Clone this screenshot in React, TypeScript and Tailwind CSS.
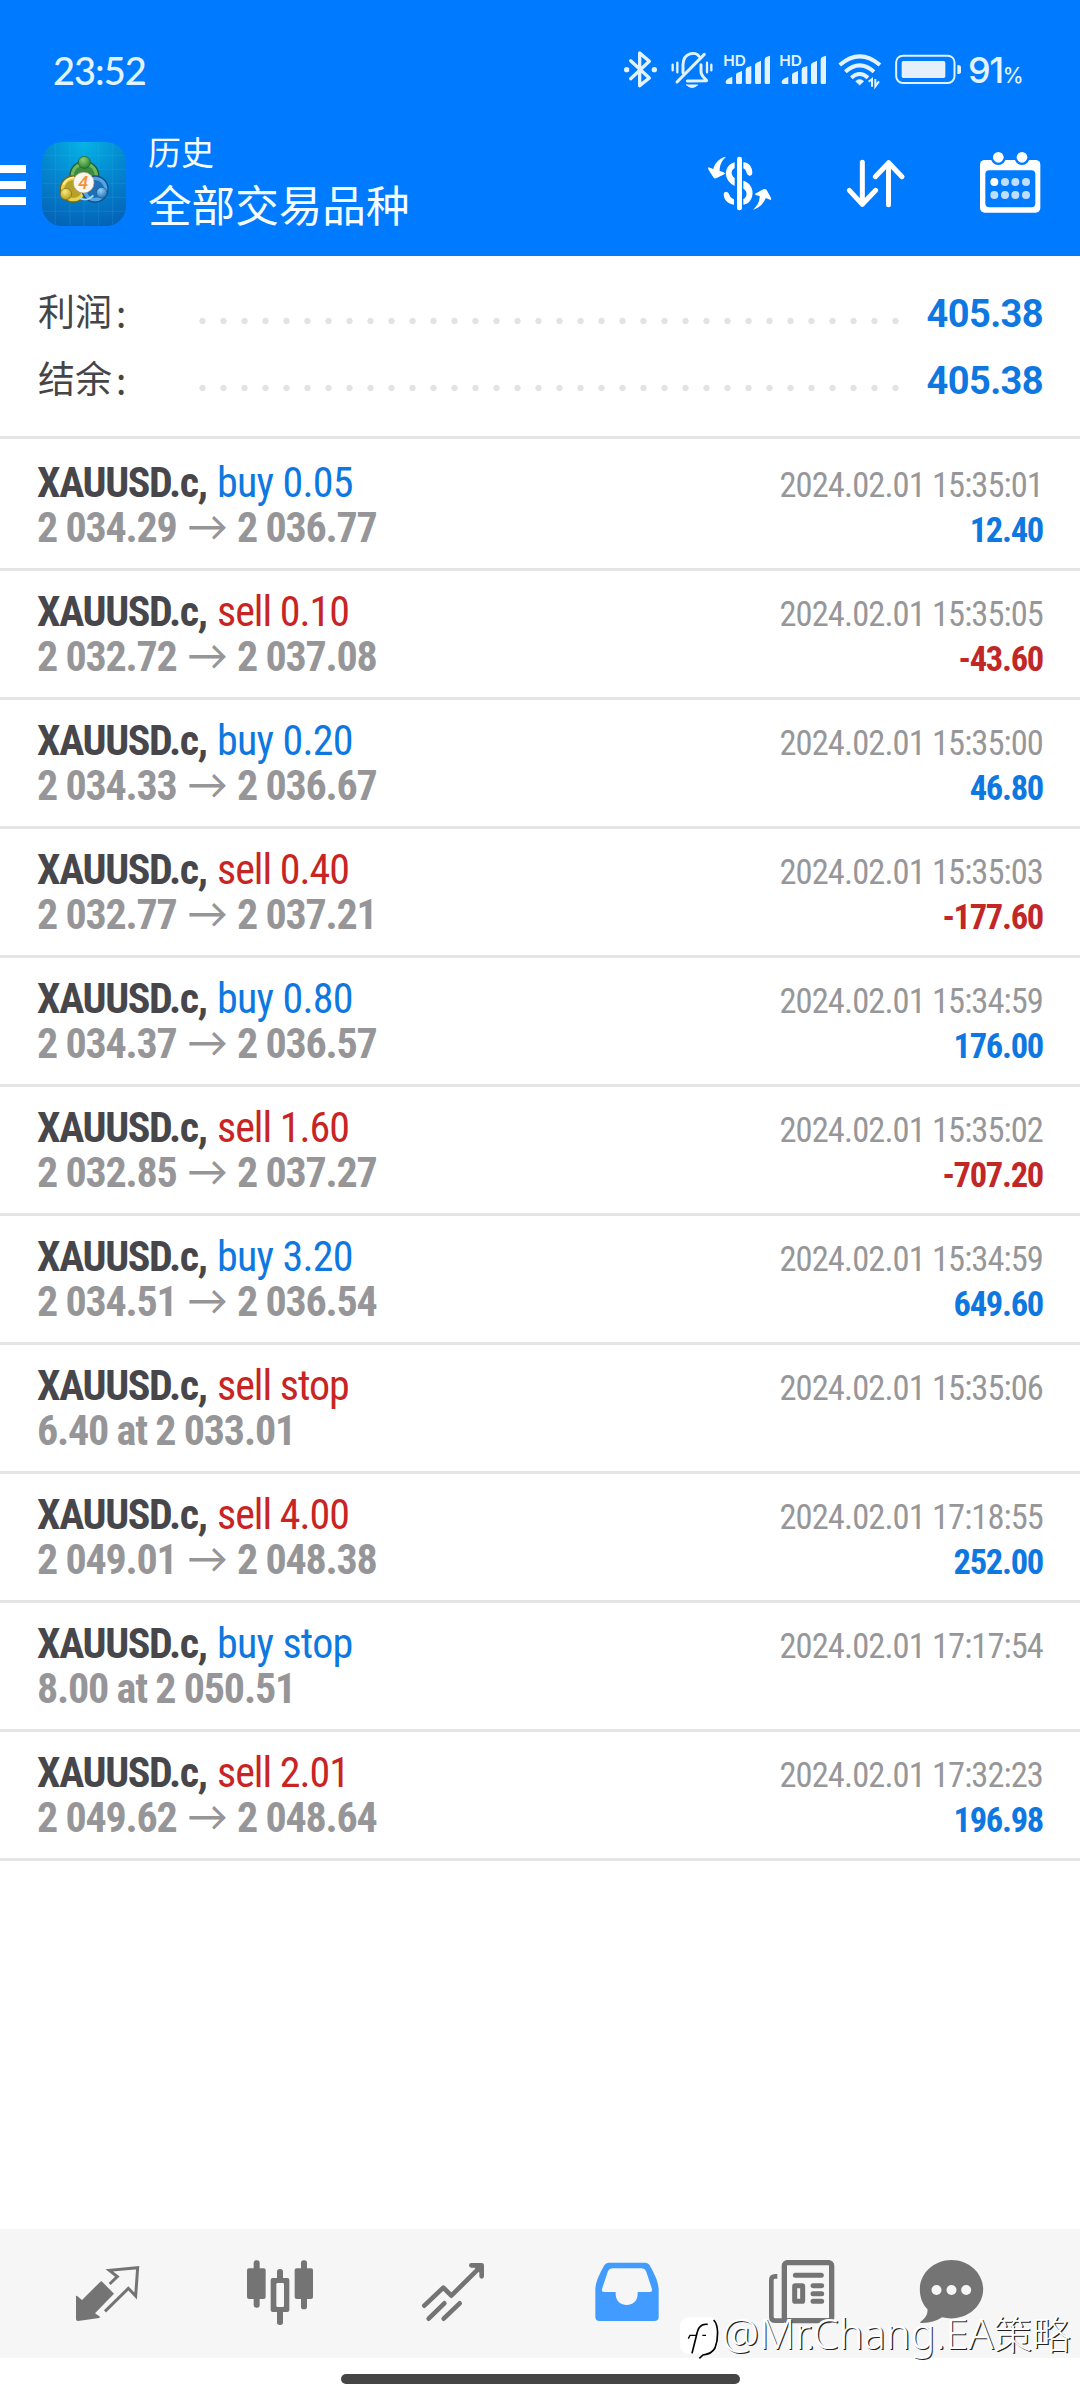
import type { ReactNode } from "react";

interface Deal {
  side: "buy" | "sell";
  volume: string;
  open?: string;
  close?: string;
  pending?: string;
  time: string;
  profit?: string;
}

const deals: Deal[] = [
  { side: "buy", volume: "0.05", open: "2 034.29", close: "2 036.77", time: "2024.02.01 15:35:01", profit: "12.40" },
  { side: "sell", volume: "0.10", open: "2 032.72", close: "2 037.08", time: "2024.02.01 15:35:05", profit: "-43.60" },
  { side: "buy", volume: "0.20", open: "2 034.33", close: "2 036.67", time: "2024.02.01 15:35:00", profit: "46.80" },
  { side: "sell", volume: "0.40", open: "2 032.77", close: "2 037.21", time: "2024.02.01 15:35:03", profit: "-177.60" },
  { side: "buy", volume: "0.80", open: "2 034.37", close: "2 036.57", time: "2024.02.01 15:34:59", profit: "176.00" },
  { side: "sell", volume: "1.60", open: "2 032.85", close: "2 037.27", time: "2024.02.01 15:35:02", profit: "-707.20" },
  { side: "buy", volume: "3.20", open: "2 034.51", close: "2 036.54", time: "2024.02.01 15:34:59", profit: "649.60" },
  { side: "sell", volume: "stop", pending: "6.40 at 2 033.01", time: "2024.02.01 15:35:06" },
  { side: "sell", volume: "4.00", open: "2 049.01", close: "2 048.38", time: "2024.02.01 17:18:55", profit: "252.00" },
  { side: "buy", volume: "stop", pending: "8.00 at 2 050.51", time: "2024.02.01 17:17:54" },
  { side: "sell", volume: "2.01", open: "2 049.62", close: "2 048.64", time: "2024.02.01 17:32:23", profit: "196.98" },
];

export default function App() {
  return (
    <div className="relative flex h-[2400px] w-[1080px] flex-col overflow-hidden bg-white font-['Roboto','Noto_Sans_CJK_SC',sans-serif]">
      <header className="h-[256px] shrink-0 bg-[#007aff] text-white">
        <StatusBar />
        <AppBar />
      </header>

      <section className="shrink-0 border-b-3 border-[#e5e5e5] pt-5 pb-[26px]">
        <SummaryRow label="利润" value="405.38" />
        <SummaryRow label="结余" value="405.38" />
      </section>

      <main className="flex-1 pt-[3px]">
        {deals.map((deal, i) => (
          <DealRow key={i} deal={deal} />
        ))}
      </main>

      <BottomNav />
      <div className="flex h-[42px] shrink-0 items-start justify-center pt-4">
        <div className="h-[10px] w-[399px] rounded-full bg-[#454545]" />
      </div>

      <Watermark />
    </div>
  );
}

function StatusBar() {
  return (
    <div className="flex h-[110px] items-start pt-[46px] pl-[53px] text-[#e2f3ff]">
      <span className="w-[567px] font-['Lato',sans-serif] text-[38px] leading-[48px] font-medium tracking-[-1px]">
        23:52
      </span>
      <BluetoothIcon />
      <MutedBellIcon />
      <SignalIcon />
      <SignalIcon />
      <WifiIcon />
      <BatteryIcon />
      <span className="ml-[5px] flex items-baseline font-['Inter',sans-serif] leading-[48px]">
        <span className="text-[36px] font-medium tracking-[-1.5px]">91</span>
        <span className="text-[21px] font-medium">%</span>
      </span>
    </div>
  );
}

function BluetoothIcon() {
  return (
    <svg className="h-[48px] w-[42px]" viewBox="60 48 126 144" fill="none" stroke="currentColor" strokeWidth="10" strokeLinecap="round" strokeLinejoin="round">
      <path d="M92 92 L148 144 L119 167 V69 L148 94 L92 146" />
      <circle cx="80" cy="119" r="5" fill="currentColor" strokeWidth="6" />
      <circle cx="163" cy="119" r="5" fill="currentColor" strokeWidth="6" />
    </svg>
  );
}

function MutedBellIcon() {
  return (
    <svg className="ml-[6px] h-[48px] w-[48px]" viewBox="204 48 144 144" fill="none" stroke="currentColor" strokeWidth="9" strokeLinecap="round" strokeLinejoin="round">
      <path d="M313 73 L231 156" />
      <path d="M249 128 V104 C250 66 288 64 297 79" />
      <path d="M303 104 V125 C303 137 314 144 320 152 L262 153" />
      <path d="M260 165 H293 Q276 180 260 165 Z" fill="currentColor" strokeWidth="3" />
      <path d="M218 104 V121 M232 98 V127 M321 98 V127 M334 104 V121" strokeWidth="7" />
    </svg>
  );
}

function SignalIcon() {
  return (
    <svg className="ml-[6px] h-[48px] w-[50px]" viewBox="366 48 150 144" fill="currentColor">
      <text x="370" y="107" fontFamily="Inter, sans-serif" fontSize="45" fontWeight="600" textLength="68" lengthAdjust="spacingAndGlyphs">
        HD
      </text>
      <path d="M377 156 Q377 150 384 146 L397 140 V162 H381 Q377 162 377 157 Z" />
      <path d="M408 134 Q408 129 413 128 L426 123 V158 Q426 162 422 162 H412 Q408 162 408 158 Z" />
      <path d="M437 120 Q437 114 442 112 L454 108 V158 Q454 162 450 162 H441 Q437 162 437 158 Z" />
      <path d="M465 106 Q465 100 470 98 L483 92 V158 Q483 162 479 162 H469 Q465 162 465 158 Z" />
      <path d="M494 90 Q494 83 499 81 L510 77 V158 Q510 162 506 162 H498 Q494 162 494 158 Z" />
    </svg>
  );
}

function WifiIcon() {
  return (
    <svg className="ml-[8px] h-[48px] w-[48px]" viewBox="708 48 144 144" fill="none" stroke="currentColor" strokeWidth="12">
      <path d="M719 105 Q779 53 840 105" />
      <path d="M736 125 Q779 87 822 125" />
      <path d="M754 143 Q779 121 804 143" />
      <path d="M767 154 Q779 143 791 154 L779 165 Z" fill="currentColor" strokeWidth="2" />
      <path d="M806 155 L816 147 V170 M826 147 V169 L837 154" strokeWidth="6" />
    </svg>
  );
}

function BatteryIcon() {
  return (
    <svg className="ml-[8px] h-[48px] w-[71px]" viewBox="876 48 213 144">
      <rect x="888.5" y="77" width="175" height="82" rx="20" fill="none" stroke="currentColor" strokeWidth="6" />
      <rect x="905" y="93" width="131" height="51" rx="5" fill="#e6f0fb" />
      <path d="M1072 105 Q1083 105 1083 112 V126 Q1083 132 1072 132 Z" fill="currentColor" />
    </svg>
  );
}

function AppBar() {
  return (
    <div className="flex h-[146px] items-center">
      <button aria-label="Menu" className="flex w-[42px] flex-col gap-2 pt-[4px]">
        <span className="h-[8px] w-[26px] bg-white" />
        <span className="h-[8px] w-[26px] bg-white" />
        <span className="h-[8px] w-[26px] bg-white" />
      </button>
      <AppLogo />
      <div className="ml-[22px] self-start pt-[24px] text-[#f4fdff]">
        <p className="text-[33px] leading-[40px]">历史</p>
        <h1 className="mt-[6px] text-[43.6px] leading-[56px]">全部交易品种</h1>
      </div>
      <div className="ml-auto flex gap-16 pr-[34px]">
        <DollarIcon />
        <SortIcon />
        <CalendarIcon />
      </div>
    </div>
  );
}

function AppLogo() {
  return (
    <svg className="mt-[2px] h-[84px] w-[84px]" viewBox="0 0 252 252">
      <defs>
        <radialGradient id="tile" cx="0.5" cy="0" r="1">
          <stop offset="0" stopColor="#05b4e6" />
          <stop offset="0.5" stopColor="#0488cf" />
          <stop offset="1" stopColor="#0465b8" />
        </radialGradient>
        <radialGradient id="green" cx="0.4" cy="0.3" r="0.8">
          <stop offset="0" stopColor="#8fce70" />
          <stop offset="1" stopColor="#1d7a2c" />
        </radialGradient>
        <radialGradient id="gold" cx="0.4" cy="0.3" r="0.8">
          <stop offset="0" stopColor="#f6ea7c" />
          <stop offset="1" stopColor="#b39113" />
        </radialGradient>
        <radialGradient id="sky" cx="0.4" cy="0.3" r="0.8">
          <stop offset="0" stopColor="#8fd0f5" />
          <stop offset="1" stopColor="#1b6db5" />
        </radialGradient>
      </defs>
      <rect width="252" height="252" rx="60" fill="url(#tile)" />
      <path d="M40 6 V246 M84 2 V250 M126 0 V252 M170 2 V250 M212 6 V246 M4 40 H248 M0 82 H252 M0 124 H252 M0 166 H252 M4 208 H248" stroke="#3fb4ea" strokeOpacity="0.3" strokeWidth="2" />
      <circle cx="127" cy="101" r="43" fill="#6fb75c" stroke="#1f5c30" strokeWidth="4" />
      <circle cx="127" cy="101" r="31" fill="#3b8c3f" />
      <circle cx="94" cy="141" r="39" fill="#e3d24a" stroke="#75651a" strokeWidth="4" />
      <circle cx="94" cy="141" r="27" fill="#b7a02a" />
      <circle cx="159" cy="141" r="39" fill="#4fa6e2" stroke="#174f86" strokeWidth="4" />
      <circle cx="159" cy="141" r="27" fill="#1f6fb8" />
      <path d="M113 168 Q134 180 154 160" fill="none" stroke="#a6dcf7" strokeWidth="5" />
      <path d="M64 128 Q74 108 96 106" fill="none" stroke="#f7ef9c" strokeWidth="5" />
      <circle cx="127" cy="61" r="18" fill="url(#green)" stroke="#1c5b2c" strokeWidth="2" />
      <circle cx="72" cy="156" r="17" fill="url(#gold)" stroke="#80691a" strokeWidth="2" />
      <circle cx="179" cy="152" r="16" fill="url(#sky)" stroke="#14508c" strokeWidth="2" />
      <circle cx="125" cy="122" r="31" fill="#fbf6f0" stroke="#b9a48c" strokeWidth="2" />
      <text x="124" y="141" textAnchor="middle" fontFamily="Roboto, sans-serif" fontSize="54" fontStyle="italic" fontWeight="500" fill="#f0923a">
        4
      </text>
    </svg>
  );
}

function DollarIcon() {
  return (
    <svg className="size-[72px]" viewBox="126 51 216 216" fill="currentColor">
      <rect x="231" y="80" width="15" height="161" rx="7" />
      <path d="M224 97 V114 C212 120 212 136 224 144 V168 C190 152 188 108 224 97 Z" />
      <path d="M250 97 C266 97 277 110 277 128 Q276 137 269 137 Q262 137 260 129 C258 121 255 117 250 115 Z" />
      <path d="M250 152 C288 162 286 219 250 224 V207 C263 202 263 182 250 176 Z" />
      <path d="M191 192 Q192 185 199 185 Q206 186 208 194 Q211 204 222 207 V224 C204 222 191 209 191 192 Z" />
      <path d="M198 81 C182 82 164 98 160 117 L145 112 Q143 114 146 120 L161 143 Q164 147 170 144 L196 131 Q192 125 179 123 C179 108 184 92 198 81 Z" />
      <path d="M279 239 C295 236 311 222 317 204 L332 210 Q335 207 332 202 L320 180 Q317 175 310 178 L284 192 Q287 197 299 198 C299 212 294 226 279 239 Z" />
    </svg>
  );
}

function SortIcon() {
  return (
    <svg className="size-[72px]" viewBox="534 51 216 216" fill="none" stroke="currentColor" strokeWidth="15" strokeLinecap="round" strokeLinejoin="round">
      <path d="M607 97 V223 M568 181 L607 223 L647 181" />
      <path d="M685.5 224 V98 M646 140 L686 98 L726 140" />
    </svg>
  );
}

function CalendarIcon() {
  const columns = [1003, 1035, 1066, 1098];
  return (
    <svg className="size-[72px]" viewBox="942 51 216 216" fill="currentColor">
      <rect x="960" y="90" width="181" height="158" rx="14" />
      <circle cx="1015" cy="82" r="23" fill="#007aff" />
      <circle cx="1086" cy="82" r="23" fill="#007aff" />
      <circle cx="1015" cy="82" r="16" />
      <circle cx="1086" cy="82" r="16" />
      <rect x="976" y="121" width="150" height="111" rx="12" fill="#007aff" />
      {columns.map((cx, i) => (
        <g key={cx}>
          <circle cx={cx} cy="156" r="12" opacity={i === 0 ? 1 : 0.75} />
          <circle cx={cx} cy="195" r="12" opacity={0.75} />
        </g>
      ))}
    </svg>
  );
}

function SummaryRow({ label, value }: { label: string; value: string }) {
  return (
    <div className="flex h-[67px] items-center pr-[37px] pl-[38px]">
      <span className="flex w-[154px] pt-[7px] text-[37px] leading-[67px] text-[#454548]">
        {label}
        <span className="-mt-px ml-[4px] font-['Noto_Sans_CJK_SC',sans-serif]">:</span>
      </span>
      <span className="mt-[22px] h-[8px] w-[714px] bg-[radial-gradient(circle,#e3e3e3_2.8px,transparent_3.6px)] bg-[length:21px_8px]" />
      <span className="ml-auto pt-[8px] text-[38px] leading-none font-bold tracking-[-0.6px] text-[#0f78e0]">
        {value}
      </span>
    </div>
  );
}

function DealRow({ deal }: { deal: Deal }) {
  const sideColor = deal.side === "buy" ? "text-[#0f78e0] tracking-[-0.7px]" : "text-[#c92424] tracking-[-1px]";
  const profitColor = deal.profit?.startsWith("-") ? "text-[#c22727]" : "text-[#0f78e0]";

  return (
    <div className="h-[129px] border-b-3 border-[#e5e5e5] px-[37px] pt-[18px] font-['Roboto_Condensed',sans-serif]">
      <div className="flex h-[45px] items-baseline justify-between leading-[45px]">
        <span className="flex text-[42px]">
          <span className="w-[180px] font-bold tracking-[-1.35px] text-[#47474b]">XAUUSD.c,</span>
          <span className={sideColor}>
            {deal.side} {deal.volume}
          </span>
        </span>
        <span className="text-[34.5px] tracking-[-0.9px] text-[#979799]">{deal.time}</span>
      </div>
      <div className="flex h-[45px] items-baseline justify-between leading-[45px] font-bold">
        <span className="flex text-[42px] tracking-[-1.2px] text-[#969699]">
          {deal.pending ?? (
            <>
              <span className="w-[150px]">{deal.open}</span>
              <span className="-mt-[2px] w-[50px] font-['Lato',sans-serif] text-[41px] font-medium">→</span>
              {deal.close}
            </>
          )}
        </span>
        {deal.profit && <span className={`text-[34.5px] tracking-[-1.3px] ${profitColor}`}>{deal.profit}</span>}
      </div>
    </div>
  );
}

function BottomNav() {
  return (
    <nav className="flex h-[129px] shrink-0 items-center bg-[#f6f6f6] pl-[21px] text-[#747474]">
      <NavItem label="Quotes">
        <svg className="size-[71px]" viewBox="36 24 213 213" fill="none" stroke="currentColor" strokeWidth="9">
          <path d="M125 94 L162 131 L105 190 L120 200 L118 204 L54 213 Q48 213 48 207 V138 Q51 136 54 140 L66 150 L121 95 Z" fill="currentColor" stroke="none" />
          <path d="M149 102 L172 80 L148 61 L233 53 L227 138 L205 115 L135 184" />
        </svg>
      </NavItem>
      <NavItem label="Charts">
        <svg className="size-[71px]" viewBox="555 24 213 213" fill="currentColor">
          <rect x="561" y="55" width="56" height="92" rx="6" />
          <rect x="581" y="31" width="18" height="142" rx="8" />
          <rect x="704" y="55" width="55" height="92" rx="6" />
          <rect x="723" y="31" width="18" height="147" rx="8" />
          <rect x="651" y="57" width="18" height="168" rx="8" />
          <rect x="632" y="84" width="56" height="102" rx="6" />
          <rect x="649" y="99" width="23" height="72" rx="4" fill="#f6f6f6" />
        </svg>
      </NavItem>
      <NavItem label="Trade">
        <svg className="size-[71px]" viewBox="1074 24 213 213" fill="none" stroke="currentColor" strokeWidth="14" strokeLinecap="round" strokeLinejoin="round">
          <path d="M1093 167 L1150 113 L1174 137 L1262 50" />
          <path d="M1234 46 H1265 V79" />
          <path d="M1250 50 L1262 62" />
          <path d="M1106 206 L1153 160 M1151 206 L1199 160" />
        </svg>
      </NavItem>
      <NavItem label="History" active>
        <svg className="size-[71px]" viewBox="33 24 213 213" fill="currentColor">
          <path
            fillRule="evenodd"
            d="M86 38 H196 Q205 38 209 46 C222 70 236 95 236 120 V200 Q236 213 223 213 H59 Q46 213 46 200 V120 C46 95 60 70 73 46 Q77 38 86 38 Z M97 55 Q88 55 84 63 L66 117 Q64 126 72 126 H107 V132 C107 176 173 176 173 132 V126 H210 Q218 126 216 117 L198 63 Q194 55 185 55 Z"
          />
        </svg>
      </NavItem>
      <NavItem label="News">
        <svg className="size-[71px]" viewBox="552 24 213 213" fill="none" stroke="currentColor" strokeWidth="16">
          <rect x="613" y="38" width="142" height="174" rx="9" />
          <path d="M592 79 H586 Q574 79 574 90 V200 Q574 212 586 212 H612" strokeWidth="14" />
          <path d="M646 76 H724 M699 107 H725 M699 131 H725 M699 154 H725" strokeLinecap="round" strokeWidth="15" />
          <rect x="644" y="107" width="24" height="47" rx="2" strokeWidth="15" />
        </svg>
      </NavItem>
      <button aria-label="Messages" className="flex w-[130px] justify-center">
        <svg className="size-[71px]" viewBox="1006.5 24 213 213" fill="currentColor">
          <path d="M1113 30 C1166 30 1208 70 1208 118 C1208 176 1147 218 1085 202 C1066 215 1044 220 1021 219 Q1018 218 1020 215 C1036 205 1042 192 1041 178 C1026 163 1018 142 1018 118 C1018 70 1060 30 1113 30 Z" />
          <g fill="#f6f6f6">
            <circle cx="1068" cy="120" r="15" />
            <circle cx="1113" cy="120" r="15" />
            <circle cx="1157" cy="120" r="15" />
          </g>
        </svg>
      </button>
    </nav>
  );
}

function NavItem({ label, active, children }: { label: string; active?: boolean; children: ReactNode }) {
  return (
    <button aria-label={label} className={`flex w-[173px] justify-center ${active ? "text-[#429bff]" : ""}`}>
      {children}
    </button>
  );
}

// Author tag laid over the corner of the page
function Watermark() {
  return (
    <div className="absolute top-[2303px] left-[680px] flex h-[60px] items-center text-white">
      <svg className="mt-[10px] h-[45px] w-[41px]" viewBox="299 206 123 135" fill="none">
        <rect x="299" y="210" width="114" height="110" rx="26" fill="#ffffff" />
        <path d="M382 231 C358 228 352 246 348 266 L335 318" stroke="#000000" strokeWidth="5" />
        <path d="M324 274 L329 264 H350 M366 264 H377" stroke="#000000" strokeWidth="4" />
        <path d="M400 218 C416 234 414 276 404 302 C394 320 378 322 368 323 L357 333" stroke="#000000" strokeWidth="5" />
      </svg>
      <span className="ml-[1px] font-['Noto_Sans','Noto_Sans_CJK_SC',sans-serif] text-[41.5px] leading-[60px] font-light whitespace-nowrap [text-shadow:1.2px_1.2px_0_#222222]">
        @Mr.Chang.EA<span className="text-[38.5px]">策略</span>
      </span>
    </div>
  );
}
